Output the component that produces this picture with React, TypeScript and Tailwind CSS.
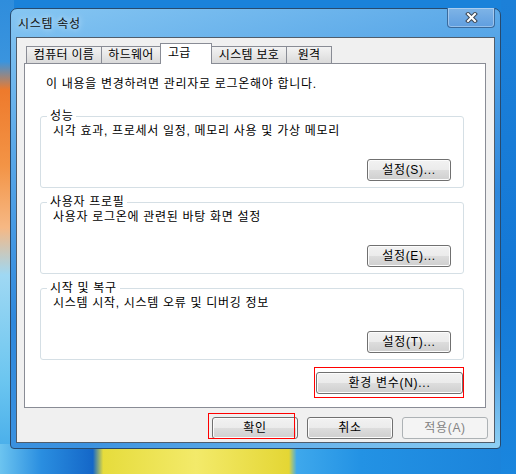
import React from 'react';

const FONT = "font-['Liberation_Sans','Noto_Sans_CJK_KR',sans-serif]";

const Btn: React.FC<{ label: string; w: string; disabled?: boolean }> = ({ label, w, disabled }) => (
  <div
    className={`${w} h-[22px] rounded-[3px] border flex items-center justify-center text-[12px] leading-[14px] ${
      disabled
        ? 'border-[#adb2b5] bg-[#f4f4f4] text-[#838383]'
        : 'border-[#707070] bg-[linear-gradient(to_bottom,#f2f2f2_0%,#ebebeb_50%,#dddddd_51%,#cfcfcf_100%)] shadow-[inset_0_0_0_1px_#fcfcfc] text-black'
    }`}
  >
    {label}
  </div>
);

const Group: React.FC<{ title: string; desc: string; btn: string; first?: boolean }> = ({ title, desc, btn, first }) => (
  <div className={`ml-[15px] w-[424px] h-[72px] rounded-[3px] border border-[#d5dfe5] flex flex-col ${first ? 'mt-[25px]' : 'mt-[14px]'}`}>
    <div className="-mt-[8px] ml-[6px] px-[3px] w-fit bg-white leading-[14px] h-[14px]">{title}</div>
    <div className="mt-[1px] pl-[12px] leading-[14px]">{desc}</div>
    <div className="mt-auto mb-[6px] pr-[12px] flex justify-end">
      <Btn label={btn} w="w-[84px]" />
    </div>
  </div>
);

const Tab: React.FC<{ label: string; w: string; active?: boolean; first?: boolean }> = ({ label, w, active, first }) =>
  active ? (
    <div className={`${w} -ml-px relative z-10 h-[21px] border border-b-0 border-[#898c95] bg-white pl-[7px] pt-[2px] leading-[14px]`}>
      {label}
    </div>
  ) : (
    <div
      className={`${w} ${first ? '' : '-ml-px'} h-[17px] mb-[1px] border border-b-0 border-[#898c95] bg-[linear-gradient(to_bottom,#f3f3f3,#dadada)] flex items-center justify-center leading-[14px]`}
    >
      {label}
    </div>
  );

export default function App() {
  return (
    <div className={`relative w-[516px] h-[474px] overflow-hidden bg-[#1a82da] ${FONT} text-[12px] tracking-[0.7px] text-black`}>
      {/* wallpaper bits */}
      <div className="absolute left-0 top-0 w-[14px] h-full bg-[linear-gradient(to_bottom,#2f8ddc_0%,#3a94de_13%,#ee7a2c_19%,#f39446_35%,#f6b884_48%,#9fd8f3_58%,#6cc6f0_80%,#3da6e8_100%)]" />
      <div className="absolute left-0 bottom-0 w-full h-[30px] bg-[linear-gradient(to_right,#6cc4f0_0%,#2a8ee0_8%,#1467c8_18%,#e6dc3c_20%,#f3ea6a_38%,#e4d634_56%,#3ea8ec_57.5%,#2392e4_70%,#1a82da_100%)]" />
      <div className="absolute right-0 top-0 w-[15px] h-full bg-[linear-gradient(to_bottom,#1c80d8,#1478d6_60%,#1a86de)]" />

      {/* window */}
      <div className="absolute left-[10px] top-[8px] w-[491px] h-[441px] rounded-t-[7px] rounded-b-[4px] border border-[#274a6e] bg-[linear-gradient(165deg,#86c6f2_0%,#5aa8e8_25%,#2f88dc_55%,#3b92e0_80%,#8fd0f4_100%)] flex flex-col">
        <div className="h-[28px] flex items-start">
          <div className="pl-[7px] pt-[8px] leading-[14px] text-[#101010] [text-shadow:0_0_6px_rgba(255,255,255,0.9)]">시스템 속성</div>
          <div className="ml-auto mr-[5px] -mt-px w-[48px] h-[20px] rounded-b-[4px] border border-t-0 border-[#3a6a9c] bg-[linear-gradient(to_bottom,#7fb4e6,#5f9ee0)] shadow-[inset_0_0_0_1px_rgba(255,255,255,0.35)] flex items-center justify-center">
            <svg width="13" height="11" viewBox="0 0 13 11">
              <path d="M3 2 L10 9 M10 2 L3 9" stroke="#3c4654" strokeWidth="4" strokeLinecap="square" />
              <path d="M3 2 L10 9 M10 2 L3 9" stroke="#ffffff" strokeWidth="2" strokeLinecap="square" />
            </svg>
          </div>
        </div>

        {/* client area */}
        <div className="mx-[5px] mb-[5px] flex-1 border border-[#4f5d6c] bg-[#f0f0f0] flex flex-col">
          <div className="mt-[5px] pl-[9px] h-[21px] flex items-end tracking-[0.3px]">
            <Tab label="컴퓨터 이름" w="w-[76px]" first />
            <Tab label="하드웨어" w="w-[60px]" />
            <Tab label="고급" w="w-[52px]" active />
            <Tab label="시스템 보호" w="w-[76px]" />
            <Tab label="원격" w="w-[46px]" />
          </div>

          <div className="-mt-px ml-[7px] w-[462px] h-[345px] border border-[#898c95] bg-white flex flex-col">
            <div className="mt-[13px] pl-[21px] leading-[14px]">이 내용을 변경하려면 관리자로 로그온해야 합니다.</div>
            <Group first title="성능" desc="시각 효과, 프로세서 일정, 메모리 사용 및 가상 메모리" btn="설정(S)..." />
            <Group title="사용자 프로필" desc="사용자 로그온에 관련된 바탕 화면 설정" btn="설정(E)..." />
            <Group title="시작 및 복구" desc="시스템 시작, 시스템 오류 및 디버깅 정보" btn="설정(T)..." />
            <div className="mt-[12px] pr-[22px] flex justify-end">
              <div className="relative">
                <Btn label="환경 변수(N)..." w="w-[147px]" />
                <div className="absolute -left-[2px] -top-[5px] w-[150px] h-[31px] border border-[#ff0000]" />
              </div>
            </div>
          </div>

          <div className="mt-[9px] mr-[6px] flex justify-end gap-[9px]">
            <div className="relative">
              <Btn label="확인" w="w-[86px]" />
              <div className="absolute -left-[4px] -top-[4px] w-[87px] h-[26px] border border-[#ff0000]" />
            </div>
            <Btn label="취소" w="w-[86px]" />
            <Btn label="적용(A)" w="w-[86px]" disabled />
          </div>
        </div>
      </div>
    </div>
  );
}
